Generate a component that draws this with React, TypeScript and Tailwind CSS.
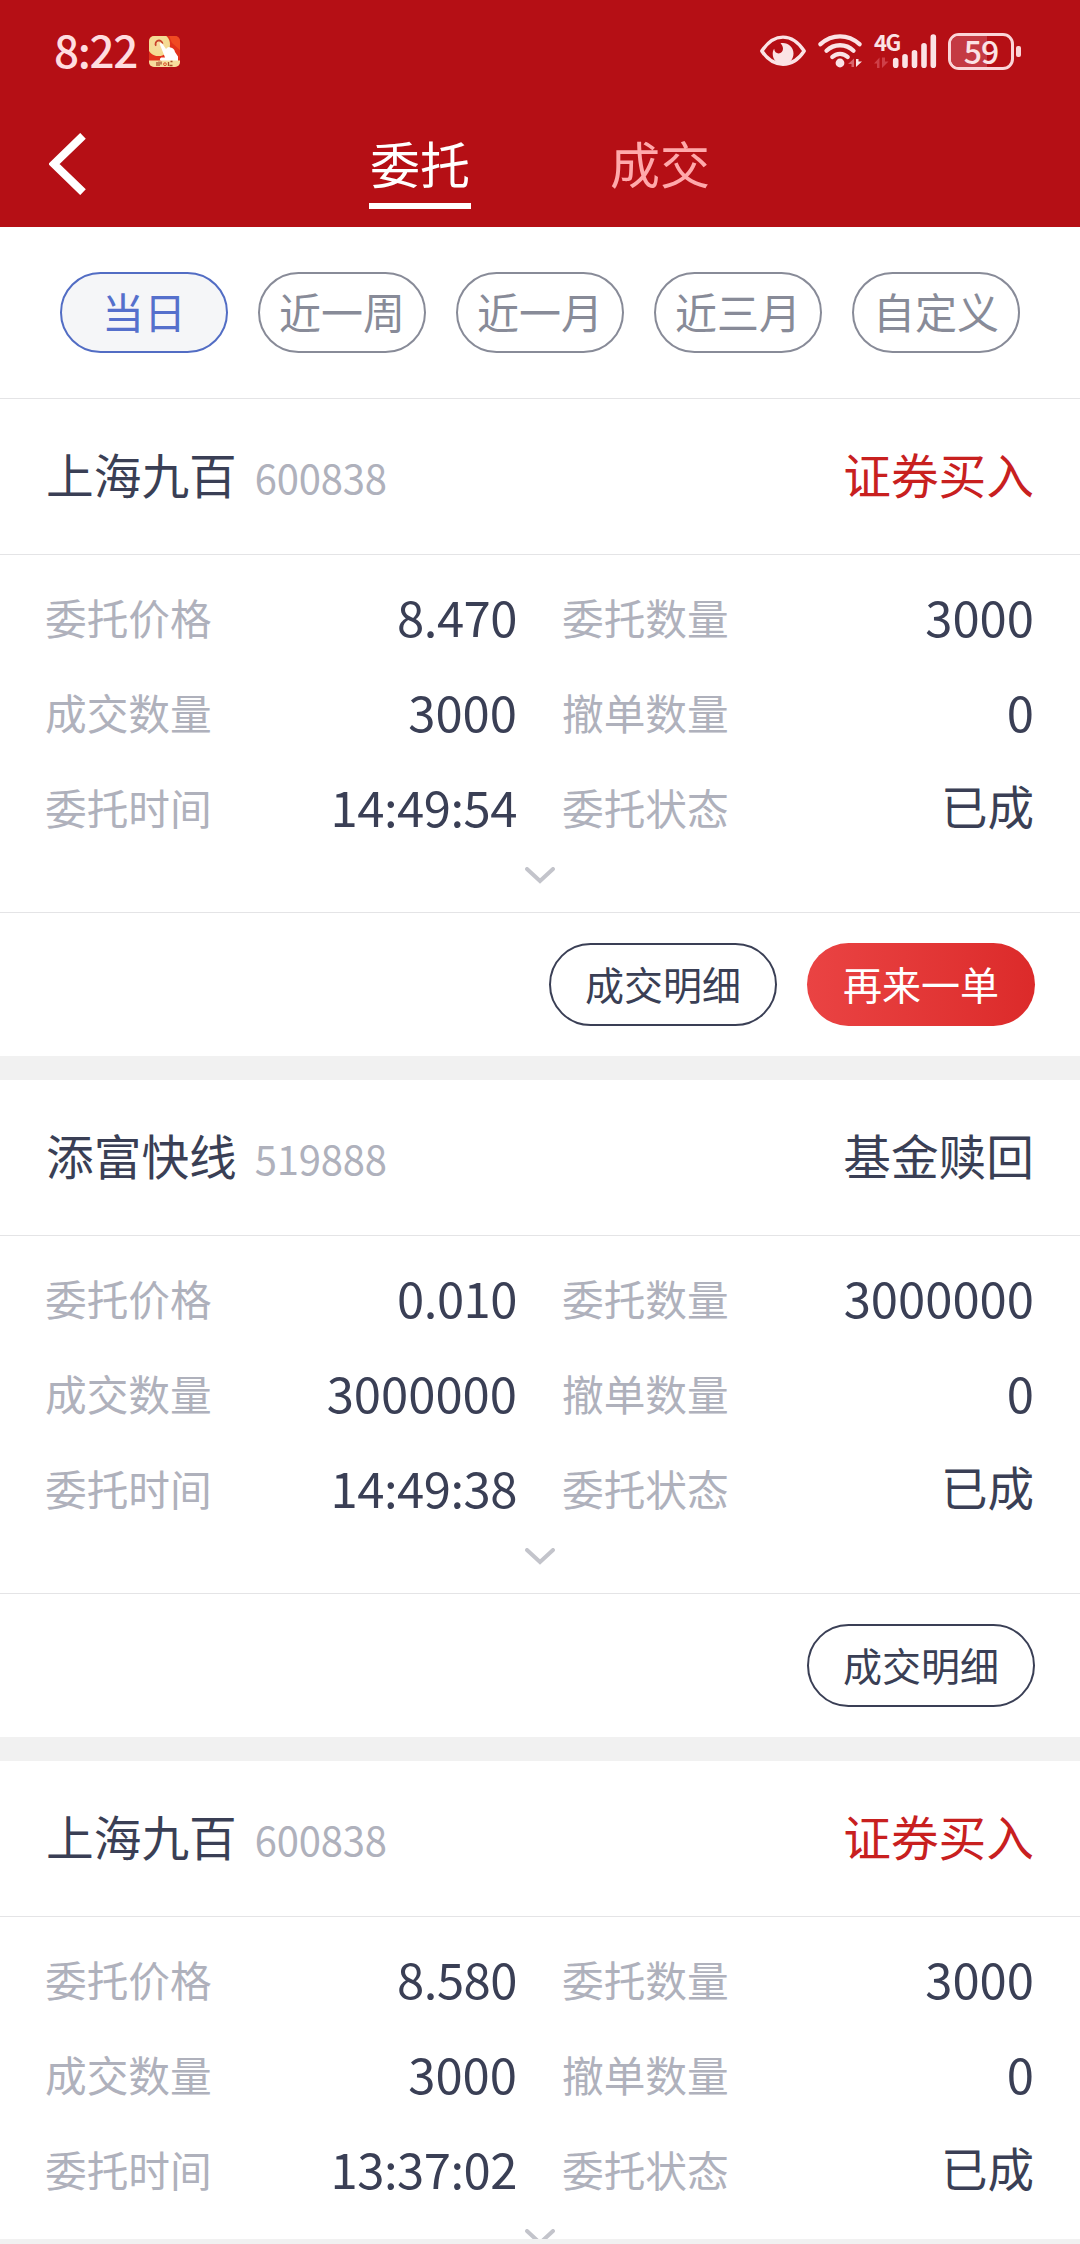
import clsx from "clsx";

type Order = {
  id: number;
  name: string;
  code: string;
  side: string;
  isBuy: boolean;
  price: string;
  amount: string;
  filled: string;
  cancelled: string;
  time: string;
  status: string;
  actions: string[];
};

const ranges = ["当日", "近一周", "近一月", "近三月", "自定义"];

const orders: Order[] = [
  {
    id: 1,
    name: "上海九百",
    code: "600838",
    side: "证券买入",
    isBuy: true,
    price: "8.470",
    amount: "3000",
    filled: "3000",
    cancelled: "0",
    time: "14:49:54",
    status: "已成",
    actions: ["成交明细", "再来一单"],
  },
  {
    id: 2,
    name: "添富快线",
    code: "519888",
    side: "基金赎回",
    isBuy: false,
    price: "0.010",
    amount: "3000000",
    filled: "3000000",
    cancelled: "0",
    time: "14:49:38",
    status: "已成",
    actions: ["成交明细"],
  },
  {
    id: 3,
    name: "上海九百",
    code: "600838",
    side: "证券买入",
    isBuy: true,
    price: "8.580",
    amount: "3000",
    filled: "3000",
    cancelled: "0",
    time: "13:37:02",
    status: "已成",
    actions: [],
  },
];

function AppBadge() {
  return (
    <svg width="31" height="31" viewBox="0 0 31 31">
      <defs>
        <clipPath id="badge">
          <rect width="31" height="31" rx="5" />
        </clipPath>
        <radialGradient id="coin">
          <stop offset="0" stopColor="#f8d9a0" />
          <stop offset="1" stopColor="#f3dc90" />
        </radialGradient>
      </defs>
      <g clipPath="url(#badge)">
        <rect width="31" height="31" fill="#e3321c" />
        <path d="M20 0h11v14l-8-7z" fill="#f04a22" />
        <circle cx="9.500" cy="8.500" r="11.500" fill="url(#coin)" />
        <path d="M7 9.800a3.500 3.500 0 1 1 6.500-2" fill="none" stroke="#c8402a" strokeWidth="1.800" />
        <path
          d="M10.500 7.500c1-1 2.300-.6 3 .6l3.500 5c1.500-2 3-2.500 4.500-1.500 2.500.5 4 2 4.500 4.500l3 4.300V25H12c-2-1-1-3.500 1-3.500h3z"
          fill="#fff"
        />
        <rect y="24.500" width="31" height="7" fill="#f7dc9c" />
        <path
          d="M8 26v4M10 25.500v4.500M12 25.500v3M19.500 26v4M21.500 25.500h2M20.500 29.500h3"
          stroke="#a8502c"
          strokeWidth="1.300"
        />
        <circle cx="16" cy="28.200" r="1.400" fill="none" stroke="#d8502c" />
      </g>
    </svg>
  );
}

function EyeIcon() {
  return (
    <svg width="46" height="32" viewBox="0 0 46 32">
      <path
        d="M1.800 16C8 6.500 15 2.100 23 2.100S38 6.500 44.200 16C38 25.500 31 29.200 23 29.200S8 25.500 1.800 16z"
        fill="none"
        stroke="#fbe3e5"
        strokeWidth="3.400"
        strokeLinejoin="round"
      />
      <path
        d="M20.500 8.200c6.500-1.500 13 3.300 13 10.300 0 6.300-4.700 10.800-10.500 10.800s-10.300-4.500-10.300-10.500c0-2 .5-3.700 1.500-5 .2 3 2 4.600 4.400 4.600 2.600 0 4.400-2 4.400-4.600 0-2.300-1-4-2.500-5.600z"
        fill="#fbe3e5"
      />
    </svg>
  );
}

function WifiIcon() {
  return (
    <svg width="46" height="36" viewBox="0 0 46 36">
      <g fill="none" stroke="#fbe3e5" strokeWidth="4.300" strokeLinecap="round">
        <path d="M2.500 11.200C14 .8 30 .8 41.500 11.200" />
        <path d="M8.500 17.700c7.500-7.300 19.500-7.300 27 0" />
        <path d="M14.300 24c4.300-4.300 11.100-4.300 15.400 0" />
      </g>
      <circle cx="22" cy="30" r="4.400" fill="#fbe3e5" />
      <path d="M30 31l6-5.500V34h-2.500v-3z" fill="#d9656c" />
      <path d="M38 26v8l6-5.500h-3.500V26z" fill="#fbe3e5" />
    </svg>
  );
}

function SignalIcon() {
  return (
    <div className="relative h-[36px] w-[63px]">
      <span className="absolute left-0 top-[-3px] text-[22px] font-bold leading-[23px] tracking-[-1.400px] text-[#fbe3e5]">
        4G
      </span>
      <svg className="absolute inset-0" width="63" height="36" viewBox="0 0 63 36">
        <path d="M0 30.500l5.500-6V35H3v-4.500zM8.500 24.500h-2M8 24.500V35l6.500-6.500H11v-4z" fill="#cf3f48" />
        <g stroke="#fbe3e5" strokeWidth="5.600" strokeLinecap="round">
          <path d="M21.700 27.500v4.800M31 23.700v8.600M40.500 19.700v12.600M50 12.700v19.600M59.300 4v28.300" />
        </g>
      </svg>
    </div>
  );
}

function Battery() {
  return (
    <div className="flex items-center gap-[2px]">
      <div className="relative h-[37px] w-[66px] rounded-[11px] border-[3px] border-[#fbd5d8]">
        <div className="h-full w-[36px] rounded-l-[8px] bg-[#c43a43]" />
        <span className="absolute inset-x-0 top-[-10px] text-center text-[32px] font-medium leading-[48px] tracking-[-1px] text-[#fbe3e5]">
          59
        </span>
      </div>
      <div className="h-[11px] w-[5px] rounded-[2px] bg-[#fbd5d8]" />
    </div>
  );
}

function StatusBar() {
  return (
    <div className="flex h-[102px] items-center pl-[54px] pr-[59px]">
      <span className="pb-[5px] text-[44px] font-medium leading-none tracking-[-1.300px] text-[#ffdde0]">8:22</span>
      <div className="ml-[12px]">
        <AppBadge />
      </div>
      <div className="ml-auto flex items-center">
        <EyeIcon />
        <div className="ml-[12px]">
          <WifiIcon />
        </div>
        <div className="ml-[10px]">
          <SignalIcon />
        </div>
        <div className="ml-[11px]">
          <Battery />
        </div>
      </div>
    </div>
  );
}

function Header() {
  return (
    <header className="h-[227px] shrink-0 bg-[#b50f15]">
      <StatusBar />
      <nav className="flex h-[125px]">
        <button className="ml-[49px] mt-[31px] h-[62px] w-[37px]">
          <svg width="37" height="62" viewBox="0 0 37 62">
            <path d="M34 2.800L5 31l29 28.200" fill="none" stroke="#fff" strokeWidth="8" />
          </svg>
        </button>
        <div className="ml-[283px] flex gap-[138px] text-[50px] leading-[60px]">
          <button className="mt-[30px] flex h-[77px] w-[102px] justify-center border-b-[6px] border-white text-white">
            委托
          </button>
          <button className="mt-[30px] flex h-[77px] w-[102px] justify-center text-[#ffa9ab]">成交</button>
        </div>
      </nav>
    </header>
  );
}

function Filters() {
  return (
    <div className="flex h-[172px] shrink-0 justify-center gap-[30px] border-b border-[#e4e4e6] pt-[45px]">
      {ranges.map((r, i) => (
        <button
          key={r}
          className={clsx(
            "flex h-[81px] w-[168px] items-center justify-center rounded-full border-2 pb-[3px] text-[42px] leading-none",
            i === 0 ? "border-[#526dc4] bg-[#f5f6f8] text-[#5570cc]" : "border-[#888b98] text-[#888b98]"
          )}
        >
          {r}
        </button>
      ))}
    </div>
  );
}

function Field({ label, value }: { label: string; value: string }) {
  return (
    <div className="flex h-[95px] items-center justify-between">
      <span className="pb-[4px] text-[41.700px] leading-none text-[#afb1bc]">{label}</span>
      <span
        className={clsx(
          "pb-[8px] leading-none",
          value === "已成" ? "text-[46.500px]" : "text-[49px]",
          /[.:]/.test(value) && "tracking-[-0.500px]"
        )}
      >
        {value}
      </span>
    </div>
  );
}

function OrderCard({ order }: { order: Order }) {
  return (
    <section className="h-[681px] shrink-0 border-b-[24px] border-[#f1f1f1] text-[#3a3f55]">
      <div className="flex h-[156px] items-center justify-between border-b border-[#e4e4e6] px-[46px] pb-[5px]">
        <div className="flex items-baseline">
          <h2 className="text-[47.700px] leading-none">{order.name}</h2>
          <span className="ml-[18px] text-[40px] leading-none tracking-[-0.200px] text-[#afb1bc]">{order.code}</span>
        </div>
        <span className={clsx("text-[47.700px] leading-none", order.isBuy && "text-[#c8201f]")}>{order.side}</span>
      </div>
      <div className="h-[358px] border-b border-[#e4e4e6] pt-[17px]">
        <div className="grid grid-cols-2 gap-x-[45px] pl-[45px] pr-[46px]">
          <Field label="委托价格" value={order.price} />
          <Field label="委托数量" value={order.amount} />
          <Field label="成交数量" value={order.filled} />
          <Field label="撤单数量" value={order.cancelled} />
          <Field label="委托时间" value={order.time} />
          <Field label="委托状态" value={order.status} />
        </div>
        <svg className="mx-auto mt-[10px]" width="30" height="17" viewBox="0 0 30 17">
          <path d="M2 2l13 12L28 2" fill="none" stroke="#c3c4cb" strokeWidth="4" strokeLinecap="round" />
        </svg>
      </div>
      <div className="flex justify-end gap-[30px] pr-[45px] pt-[30px] text-[39px] leading-none">
        {order.actions.map((action) => (
          <button
            key={action}
            className={clsx(
              "h-[83px] w-[228px] rounded-full pb-[3px]",
              action === "再来一单"
                ? "bg-linear-to-r from-[#ea4343] to-[#dc2a2a] text-white"
                : "border-2 border-[#3a3f55]"
            )}
          >
            {action}
          </button>
        ))}
      </div>
    </section>
  );
}

export default function App() {
  return (
    <div className="flex h-[2244px] w-[1080px] flex-col overflow-hidden bg-[#f1f1f1] font-['Noto_Sans_CJK_SC',sans-serif]">
      <Header />
      <main className="flex h-[2012px] flex-col overflow-hidden bg-white">
        <Filters />
        {orders.map((o) => (
          <OrderCard key={o.id} order={o} />
        ))}
      </main>
    </div>
  );
}
